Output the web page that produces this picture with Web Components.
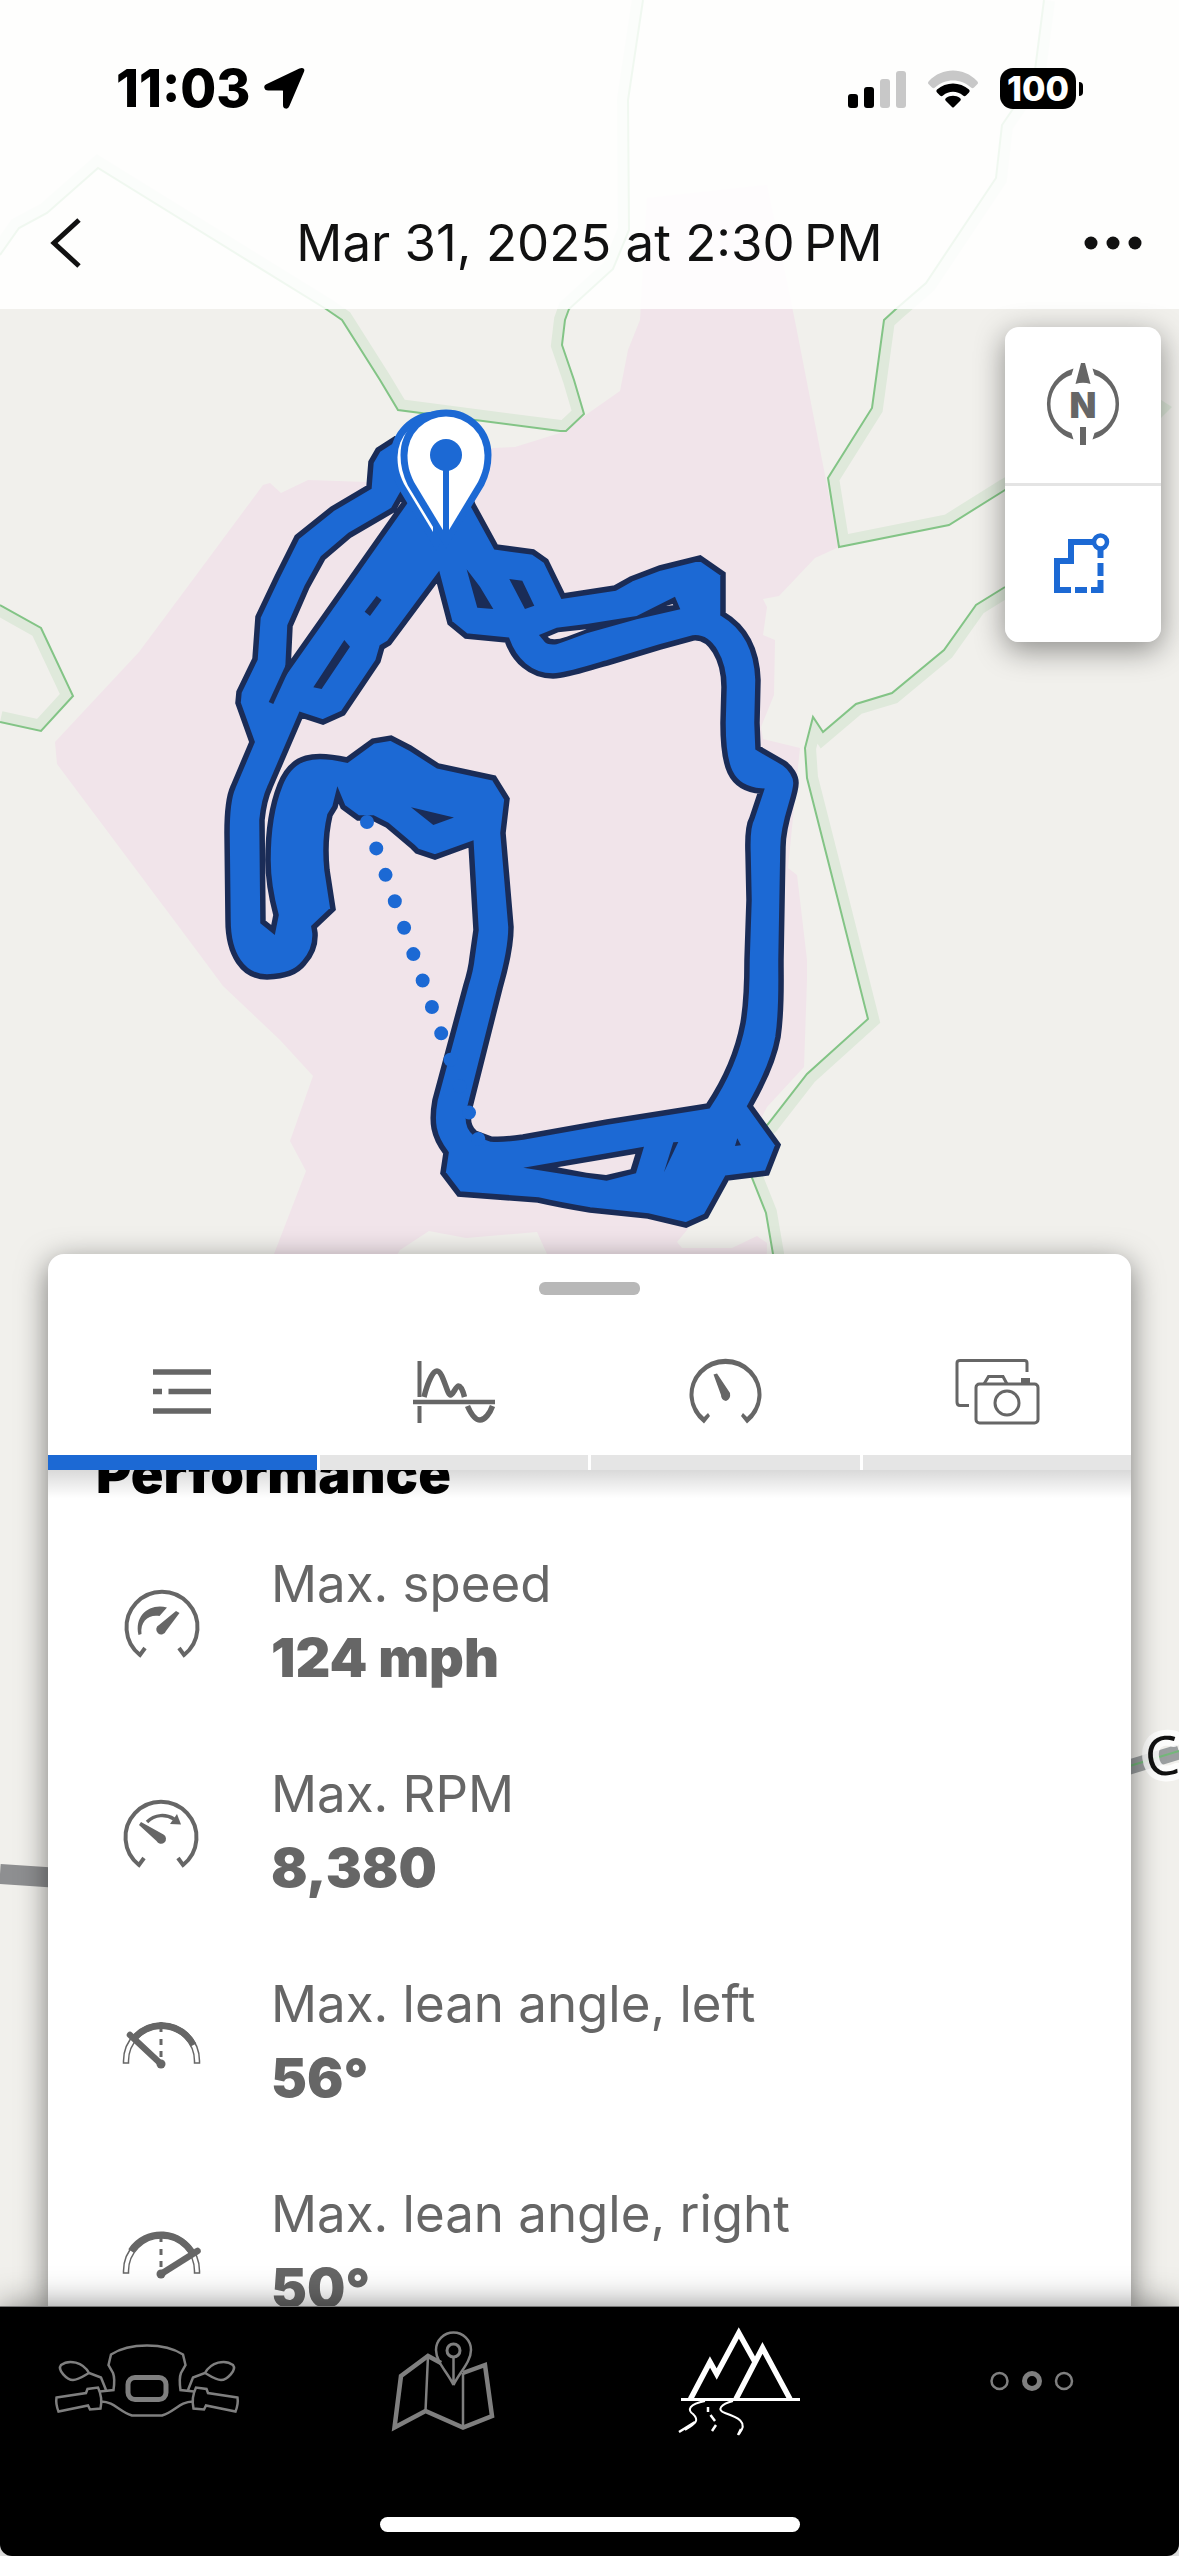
<!DOCTYPE html>
<html lang="en">
<head>
<meta charset="utf-8">
<meta name="viewport" content="width=device-width, initial-scale=1">
<title>Ride details</title>
<style>
  html, body { margin: 0; height: 100%; background: #fff; }
  body { font-family: Inter, "Liberation Sans", sans-serif; color: #666; }
</style>
</head>
<body>
<ride-app></ride-app>

<script>
const define = (name, html, setup) => customElements.define(name, class extends HTMLElement {
  constructor() {
    super();
    const t = document.createElement('template');
    t.innerHTML = html;
    this.attachShadow({ mode: 'open' }).append(t.content.cloneNode(true));
  }
  connectedCallback() { if (setup) setup(this, this.shadowRoot); }
});

/* ---------- icons ---------- */
const ICONS = {
  back: [60, 60, `<path d="M43 7 18 30 43 53" fill="none" stroke="currentColor" stroke-width="5"/>`],
  more: [60, 60, `<g fill="currentColor"><circle cx="8" cy="30" r="6.5"/><circle cx="30" cy="30" r="6.5"/><circle cx="52" cy="30" r="6.5"/></g>`],
  location: [44, 44, `<path d="M40.500 4.500 26 38.500C25 41 22.500 40.500 22.500 38V24Q22.500 22 20.500 22H6C3.500 22 3 19.500 5 18.500L38 2.800C40 2 41.500 2.500 40.500 4.500Z" fill="currentColor" stroke="currentColor" stroke-width="3" stroke-linejoin="round"/>`],
  signal: [58, 38, `<rect x="0" y="24" width="10" height="14" rx="3"/><rect x="16" y="17" width="10" height="21" rx="3"/><g fill="#c8c8c8"><rect x="32" y="9" width="10" height="29" rx="3"/><rect x="48" y="1" width="10" height="37" rx="3"/></g>`],
  wifi: [52, 38, `<path d="M2 14.500Q0 13 2 11C15-3 37-3 50 11Q52 13 50 14.500L47 17.500Q45.500 19 44 17.500C34 8 18 8 8 17.500Q6.500 19 5 17.500Z" fill="#c8c8c8"/><path d="M10 22.500Q8.500 21 10 19.500C19 11.500 33 11.500 42 19.500Q43.500 21 42 22.500L39 25.500Q37.500 27 36 25.500C30 20.500 22 20.500 16 25.500Q14.500 27 13 25.500Z"/><path d="M18.500 30.500Q17.500 29 19 28C23 25 29 25 33 28Q34.500 29 33.500 30.500L27 37Q26 38 25 37Z"/>`],
  north: [156, 156, `<g fill="currentColor"><path d="M68.500 41.500A37 37 0 0 0 68.500 112.500L66.500 106A30.500 30.500 0 0 1 66.500 48ZM87.500 41.500A37 37 0 0 1 87.500 112.500L89.500 106A30.500 30.500 0 0 0 89.500 48Z"/><path d="M76 36H80L85.500 57Q78 54.500 70.500 57Z"/><rect x="75" y="100" width="6" height="18"/><text x="78" y="91" text-anchor="middle" font-size="35" font-weight="900">N</text></g>`],
  route: [156, 156, `<g fill="none" stroke="#1c69d4" stroke-width="6"><path d="M66 104H52V75H66V56H88M95.500 64V72M95.500 77V90M95.500 94V104H86M82 104H70"/><circle cx="95.500" cy="56" r="6.500" stroke-width="4.500"/></g>`],
  list: [100, 126, `<path d="M21 43H79M21 62.500H30M36.500 62.500H79M21 82H79" fill="none" stroke="currentColor" stroke-width="5.500"/>`],
  chart: [100, 126, `<g fill="none" stroke="currentColor"><path d="M15.500 32V68M15.500 77V94" stroke-width="4"/><path d="M9 73H91" stroke-width="4.500"/><path d="M20 68C24 52 29 42 33 42C39 42 43 66 46.500 66C49 66 52 57 54.500 57C57 57 59 62 60.500 68M63.500 77C67 85 71 91 76 91C81 91 86 84 88.500 77" stroke-width="5.500"/></g>`],
  gauge: [100, 126, `<g fill="currentColor"><path d="M29 94.500A36 36 0 1 1 72 94.500L66 87 68 84 72 88A32 30.500 0 1 0 29 88L33 84 35 87Z"/><path d="M38.500 45.500 42 44.500 55 64Q56 70 51 72Q46 71 46 66Z"/></g>`],
  camera: [100, 126, `<g fill="none" stroke="currentColor" stroke-width="3"><path d="M80 43V34Q80 31.500 77.500 31.500H13Q10 31.500 10 34V73Q10 76.500 13 76.500H22"/><rect x="29" y="55" width="62" height="39" rx="3.500"/><circle cx="60" cy="74" r="12"/><path d="M37 55 41.500 47.500H56L60 55"/></g><rect x="74" y="49" width="9" height="5" fill="currentColor"/>`],
  speed: [130, 148, `<path d="M49 101 44 108A35.500 35.500 0 1 1 88 108L83 101" fill="none" stroke="currentColor" stroke-width="4"/><g fill="currentColor"><path d="M42.500 88C38 68 54 56 71 60.500L63.500 69C53 67 44 74 45.500 87Z"/><path d="M80 64 83.500 66 70 84A5 5 0 1 1 63 78Z"/></g>`],
  rpm: [130, 148, `<path d="M48 101 43 108A35.500 35.500 0 1 1 87 108L82 101" fill="none" stroke="currentColor" stroke-width="4"/><path d="M51 65C59 57 70 57 78 62" fill="none" stroke="currentColor" stroke-width="3.500"/><g fill="currentColor"><path d="M81 57 85 67.500 74 67Z"/><path d="M43 68 45 65 67.500 77.500A5 5 0 1 1 60.500 84Z"/></g>`],
  leanLeft: [130, 148, `<g fill="none" stroke="currentColor"><path d="M27.500 96V94A38 38 0 0 1 103.500 94V96H98.500V94A33 33 0 0 0 32.500 94V96Z" stroke-width="1.500"/><path d="M37 73A36 36 0 0 1 97.500 78" stroke-width="6.500"/><path d="M65 55V65M65 72V78M65 84V90" stroke-width="3"/><path d="M34 68 65 97" stroke-width="6.500" stroke-linecap="round"/></g><circle cx="65" cy="97" r="4.500" fill="currentColor"/>`],
  leanRight: [130, 148, `<g fill="none" stroke="currentColor"><path d="M27.500 96V94A38 38 0 0 1 103.500 94V96H98.500V94A33 33 0 0 0 32.500 94V96Z" stroke-width="1.500"/><path d="M35 74A36 36 0 0 1 97.500 78" stroke-width="6.500"/><path d="M65 55V65M65 72V78M65 84V90" stroke-width="3"/><path d="M101.500 74 65 97" stroke-width="6.500" stroke-linecap="round"/></g><circle cx="65" cy="97" r="4.500" fill="currentColor"/>`],
  bike: [200, 150, `<defs><g id="half"><path d="M100 38.500C86 38.500 74 41 64 47.500L61.500 58 66 66C68 71 67.500 76 66.500 83L53 84.500M59 83 54 70.500 42 66C36 55 22 52 14 58C10 63 20 73 26 73C32 73 38 68 42 66"/><path d="M9.500 90.500 39 86 40.500 82 51 80.500C55 89 55 95 53.500 101.500L43 102.500 41 98.500 11.500 104.500Q8.500 97 9.500 90.500Z"/><path d="M54 94.500C68 95 71 104 85 108.500H100"/></g></defs><g fill="none" stroke="currentColor" stroke-width="2.500"><use href="#half"/><use href="#half" transform="translate(200) scale(-1 1)"/><rect x="81" y="70.500" width="38" height="22" rx="7" stroke-width="5"/></g>`],
  map: [200, 150, `<g fill="none" stroke="currentColor" stroke-width="4.500"><path d="M99 56 86 49 59 69 52.500 120.500 83.500 104 121 120.500 150 109 143 58 121 66"/><path d="M86 49 83.500 104M121 66V120M111.500 78C106 66 94 55 94 43A17.500 17.500 0 0 1 129 43C129 55 117 66 111.500 78V50" stroke-width="2.500"/><circle cx="111.500" cy="43.500" r="6.500" stroke-width="3"/></g>`],
  mountains: [200, 150, `<g fill="none" stroke="currentColor"><path d="M53.500 92 73 55 79.700 67 101.800 26 118 55M99 92 125.500 41 153 92" stroke-width="5.500"/><path d="M44 92.500H163" stroke-width="3"/><path d="M68 94C52 97 50 103 56 107C62 113 60 116 48 123M96 94C84 97 79 103 88 106C100 110 112 115 102 127" stroke-width="2"/><path d="M58 115 42 125M71 100V105M73.500 108 78 114M79 118 75 124M104 122 101 128" stroke-width="2.500"/></g>`],
  dots: [200, 150, `<g fill="none" stroke="currentColor"><circle cx="67.500" cy="74" r="8" stroke-width="2.500"/><circle cx="100" cy="74" r="7.500" stroke-width="5"/><circle cx="132" cy="74" r="8" stroke-width="2.500"/></g>`]
};
customElements.define('app-icon', class extends HTMLElement {
  constructor() { super(); this.attachShadow({ mode: 'open' }); }
  connectedCallback() {
    const [w, h, body] = ICONS[this.getAttribute('name')];
    this.shadowRoot.innerHTML = `<style>:host{display:block;flex:none}svg{display:block}</style>
      <svg width="${w}" height="${h}" viewBox="0 0 ${w} ${h}" aria-hidden="true">${body}</svg>`;
  }
});

/* ---------- map with the recorded track ---------- */
define('route-map', `
<style>
  :host { display: block; background: #f1f0ec; overflow: hidden; }
  svg { display: block; width: 100%; height: auto; }
  .band { fill: none; stroke: #dfe9db; stroke-width: 22; }
  .line { fill: none; stroke: #83c486; stroke-width: 2; }
</style>
<svg viewBox="0 0 1179 2556" role="img" aria-label="Map of the recorded ride">
  <defs>
    <path id="a" d="M0 255 19 228 47 213 98 168 326 309 342 320 380 380 398 410 560 431H566L584 414 574 380 562 345 565 320 569 309 613 269 629 230 628 100 643 0"/>
    <path id="b" d="M1044 0 1034 78 1002 125 996 178 926 283 896 309 884 320 872 408 828 478 839 547 949 525 1005 490 1150 407"/>
    <path id="c" d="M1005 587 976 605 944 650 892 693 856 704 823 732 813 717 805 748 807 778 838 900 868 1019 807 1074 768 1124 740 1150 752 1178 766 1213 773 1254 775 1300"/>
    <path id="d" d="M0 605 41 628 73 696 41 731 0 722"/>
    <clipPath id="ca"><path d="M0 255 19 228 47 213 98 168 326 309 342 320 380 380 398 410 560 431H566L584 414 574 380 562 345 565 320 569 309 613 269 629 230 628 100 643 0H0Z"/></clipPath>
    <clipPath id="cb"><path d="M1044 0 1034 78 1002 125 996 178 926 283 896 309 884 320 872 408 828 478 839 547 949 525 1005 490 1150 407V0Z"/></clipPath>
    <clipPath id="cc"><path d="M1005 587 976 605 944 650 892 693 856 704 823 732 813 717 805 748 807 778 838 900 868 1019 807 1074 768 1124 740 1150 752 1178 766 1213 773 1254 775 1300H1179V587Z"/></clipPath>
    <clipPath id="cd"><path d="M0 605 41 628 73 696 41 731 0 722Z"/></clipPath>
    <g id="pin">
      <path d="M446 535 414 482C409 472 407.500 464 407.500 455A38.500 38.500 0 0 1 484.500 455C484.500 464 483 472 478 482Z" fill="#fff" stroke="#1c69d4" stroke-width="14" paint-order="stroke"/>
      <circle cx="446" cy="455" r="16" fill="#1c69d4"/>
      <path d="M446 455V535" stroke="#1c69d4" stroke-width="6"/>
    </g>
  </defs>

  <path fill="#f1e4ea" d="M647 198 767 185 796 326 839 547 815 558 779 596 763 599 767 607 763 635 775 640 774 695 761 727 763 739 800 748 798 767 788 868 797 875 800 900 807 960V980L804 1067 767 1107 740 1160 687 1230 677 1242 682 1248H732L757 1236 767 1243 766 1300H560L547 1254 537 1232 466 1238 429 1231 400 1250 370 1300H265L274 1254 306 1171 290 1141 313 1076 280 1040 223 986 200 955 57 764 55 742 139 652 200 570 263 485 270 483 281 493 308 480 367 482 493 448 515 447 560 433 620 391 628 350 640 320Z"/>
  <g clip-path="url(#ca)"><use href="#a" class="band"/></g>
  <g clip-path="url(#cb)"><use href="#b" class="band"/></g>
  <g clip-path="url(#cc)"><use href="#c" class="band"/></g>
  <g clip-path="url(#cd)"><use href="#d" class="band"/></g>
  <path d="M1155 396 1172 407 1155 424Z" fill="#dfe9db"/>
  <use href="#a" class="line"/><use href="#b" class="line"/><use href="#c" class="line"/><use href="#d" class="line"/>

  <!-- highways beside the sheet -->
  <path d="M0 1874 60 1878" stroke="#8e8f91" stroke-width="20"/>
  <path d="M1110 1773 1179 1752" stroke="#9b9fa0" stroke-width="15"/>
  <path d="M1110 1772 1179 1751" stroke="#74b87a" stroke-width="2"/>
  <text x="1147" y="1777" font-family="'Open Sans', sans-serif" font-size="54" fill="#111" stroke="#fff" stroke-opacity=".85" stroke-width="12" stroke-linejoin="round" paint-order="stroke" transform="rotate(-6 1147 1777)">C</text>

  <!-- track: outer edge and the enclosed loop -->
  <path fill="#1c69d4" stroke="#1a2c57" stroke-width="5.500" fill-rule="evenodd" d="
    M395 439 378 450 371 462 369 487 332 509 297 537 277 577 258 617 255 659 239 692 238 703 252 742
    233 787Q227 800 227 833L228 920C228 955 243 977 267 977C285 976 296 973 304 963Q316 950 315 933L314 927
    333 909 327 870Q324 840 330 815L335 807 338 795 343 807 358 818H373L387 825 413 847 417 851 435 857 471 844
    476 930 472 958Q471 969 466 985L435 1100C431 1122 433 1136 446 1153L443 1173 459 1194 538 1200Q560 1205 590 1210L648 1216
    686 1225 706 1216 727 1178 767 1173 778 1145 750 1106C763 1083 774 1060 778 1037C782 1010 781 990 781 960L783 847
    C783 820 796 797 796 783C796 776 791 768 784 763L758 748 757 723 758 680C757 650 745 627 723 614V574L700 558
    660 568 631 579 615 588 563 596 546 561 533 552 496 547 473 505 450 450Z
    M438 577 450 623 466 636 507 640C514 660 530 676 553 676C570 675 588 668 607 663L660 647 693 638
    C711 636 724 660 724 687L723 723C723 765 729 789 761 791L752 818Q747 827 748 853L749 900 747 960
    Q747 1000 743 1023C737 1055 722 1085 708 1106L607 1122 523 1137Q503 1140 491 1139L475 1133Q465 1125 470 1107
    L500 988Q511 950 511 927L503 833 507 799 494 778 438 766 410 748 391 738 373 741 347 760
    C315 753 292 754 280 785Q268 815 268 860Q268 885 276 915L273 930 263 922 262 820Q264 800 270 787
    L301 715 323 722 343 713 378 661 382 647 389 643Z
    M405 502 401 496 393 510 350 535 323 558 307 587 290 626 288 668Z"/>
  <path d="M288 666 271 703" stroke="#1a2c57" stroke-width="5"/>
  <g transform="translate(200 380) scale(.3333)" fill="#1a2c57">
    <path d="M530 648 545 660 510 708 494 695ZM433 780 450 800 365 927 340 922ZM800 568 840 620 880 687 832 683ZM928 597 967 602 1003 677 975 687ZM633 1282 762 1313 700 1335Z"/>
  </g>
  <g transform="translate(420 500) scale(.3333)">
    <path fill="#1a2c57" d="M357 405 410 383 500 372 650 348 765 290 781 328 650 358 500 400Q440 423 410 433 385 436 375 427Z"/>
    <path fill="#f1e4ea" d="M383 410 415 397 500 388 440 410Q395 425 383 410ZM738 318 758 312 760 316Z"/>
  </g>
  <g transform="translate(400 960) scale(.3333)">
    <path fill="#1a2c57" d="M370 623 732 560 708 640 620 662 540 650ZM820 547 835 546 792 637ZM1012 535 1023 556 1005 558Z"/>
    <path fill="#f1e4ea" d="M472 622 706 582 692 628 618 645 560 638Z"/>
  </g>
  <path d="M367 822 479 1141" fill="none" stroke="#1c69d4" stroke-width="14" stroke-linecap="round" stroke-dasharray="0 28"/>
  <use href="#pin" x="-10" y="2"/>
  <use href="#pin"/>
</svg>`);

/* ---------- top of the screen ---------- */
define('status-bar', `
<style>
  :host { display: flex; align-items: center; height: 177px; padding: 0 96px 0 116px; color: #000; }
  time { font-size: 52px; line-height: 60px; font-weight: 800; margin-right: 12px; }
  .right { display: flex; align-items: center; gap: 21px; margin-left: auto; }
  .battery { display: flex; align-items: center; gap: 3px; }
  .level { background: #000; color: #fff; border-radius: 13px; width: 76px; line-height: 41px; font-size: 34px; font-weight: 800; text-align: center; }
  .nub { width: 4px; height: 14px; border-radius: 0 4px 4px 0; background: #000; }
</style>
<time>11:03</time><app-icon name="location"></app-icon>
<div class="right">
  <app-icon name="signal"></app-icon><app-icon name="wifi"></app-icon>
  <div class="battery"><span class="level">100</span><span class="nub"></span></div>
</div>`);

define('page-header', `
<style>
  :host { display: grid; grid-template-columns: 60px 1fr 60px; align-items: center; height: 132px; padding: 0 36px; color: #111; }
  h1 { margin: 0; text-align: center; font-size: 51px; line-height: 74px; font-weight: 400; }
  button { all: unset; cursor: pointer; }
</style>
<button aria-label="Back"><app-icon name="back"></app-icon></button>
<h1><slot></slot></h1>
<button aria-label="More"><app-icon name="more"></app-icon></button>`);

define('map-controls', `
<style>
  :host { display: grid; gap: 3px; background: #e4e4e4; border-radius: 14px; overflow: hidden; box-shadow: 0 8px 30px rgba(0,0,0,.42); color: #666; }
  button { all: unset; background: #fff; cursor: pointer; }
</style>
<button aria-label="Face north"><app-icon name="north"></app-icon></button>
<button aria-label="Show whole route"><app-icon name="route"></app-icon></button>`);

/* ---------- sheet ---------- */
define('metric-row', `
<style>
  :host { display: grid; grid-template-columns: 130px 1fr; column-gap: 45px; color: #666; }
  dl { margin: 0; font-size: 51px; line-height: 74px; }
  dd { margin: 0; font-size: 54px; font-weight: 900; }
</style>
<slot name="icon"></slot>
<dl><dt><slot name="label"></slot></dt><dd><slot></slot></dd></dl>`);

define('ride-sheet', `
<style>
  :host { display: flex; flex-direction: column; min-height: 0; background: #fff; border-radius: 16px 16px 0 0; box-shadow: 0 8px 30px rgba(0,0,0,.5); }
  .grab { width: 101px; height: 13px; border-radius: 6px; background: #b8b8b8; margin: 28px auto 34px; }
  nav { display: grid; grid-template-columns: repeat(4, 1fr); column-gap: 3px; }
  nav button { all: unset; display: flex; justify-content: center; cursor: pointer; border-bottom: 15px solid #e5e5e5; color: #666; }
  nav button[aria-selected=true] { border-color: #1c69d4; }
  .body { position: relative; flex: 1; min-height: 0; display: flex; }
  .body::before { content: ""; position: absolute; inset: 0 0 auto; height: 28px; background: linear-gradient(rgba(0,0,0,.15), rgba(0,0,0,0)); }
  .scroll { flex: 1; overflow-y: auto; scrollbar-width: none; padding: 24px 48px 100px; }
  h2 { margin: 0 0 36px; font-size: 54px; line-height: 74px; font-weight: 900; color: #000; }
  .rows { display: grid; row-gap: 62px; }
</style>
<div class="grab"></div>
<nav role="tablist">
  <button role="tab" aria-selected="true" aria-label="Overview"><app-icon name="list"></app-icon></button>
  <button role="tab" aria-label="Charts"><app-icon name="chart"></app-icon></button>
  <button role="tab" aria-label="Gauges"><app-icon name="gauge"></app-icon></button>
  <button role="tab" aria-label="Photos"><app-icon name="camera"></app-icon></button>
</nav>
<div class="body"><div class="scroll">
  <h2>Performance</h2>
  <div class="rows"><slot></slot></div>
</div></div>`, (host, root) => queueMicrotask(() => { root.querySelector('.scroll').scrollTop = 57; }));

define('tab-bar', `
<style>
  :host { display: grid; justify-items: center; background: #000; border-radius: 0 0 12px 12px; box-shadow: 0 -1px 0 #777, 0 0 34px rgba(0,0,0,.5); color: #7f7f7f; }
  nav { justify-self: stretch; display: grid; grid-template-columns: repeat(4, 1fr); justify-items: center; }
  a { color: inherit; }
  a[aria-current] { color: #fff; }
  .home { width: 420px; height: 15px; border-radius: 8px; background: #fff; margin: 60px 0 24px; }
</style>
<nav>
  <a href="#ride" aria-label="Ride"><app-icon name="bike"></app-icon></a>
  <a href="#map" aria-label="Map"><app-icon name="map"></app-icon></a>
  <a href="#trips" aria-label="Trips" aria-current="page"><app-icon name="mountains"></app-icon></a>
  <a href="#more" aria-label="More"><app-icon name="dots"></app-icon></a>
</nav>
<div class="home"></div>`);

/* ---------- screen ---------- */
define('ride-app', `
<style>
  :host { position: relative; display: flex; flex-direction: column; height: 100vh; overflow: hidden; }
  route-map { position: absolute; inset: 0 0 60px; }
  header { position: relative; background: rgba(255,255,255,.88); }
  main { position: relative; flex: 1; min-height: 0; display: grid; grid-template-rows: 35fr 39fr; }
  map-controls { justify-self: end; align-self: start; margin: 18px 18px 0; }
  ride-sheet { margin: 0 48px; }
  tab-bar { position: relative; }
</style>
<route-map></route-map>
<header>
  <status-bar></status-bar>
  <page-header>Mar 31, 2025 at 2:30&#8239;PM</page-header>
</header>
<main>
  <map-controls></map-controls>
  <ride-sheet>
    <metric-row><app-icon slot="icon" name="speed"></app-icon><span slot="label">Max. speed</span>124 mph</metric-row>
    <metric-row><app-icon slot="icon" name="rpm"></app-icon><span slot="label">Max. RPM</span>8,380</metric-row>
    <metric-row><app-icon slot="icon" name="leanLeft"></app-icon><span slot="label">Max. lean angle, left</span>56°</metric-row>
    <metric-row><app-icon slot="icon" name="leanRight"></app-icon><span slot="label">Max. lean angle, right</span>50°</metric-row>
  </ride-sheet>
</main>
<tab-bar></tab-bar>`);
</script>
</body>
</html>
